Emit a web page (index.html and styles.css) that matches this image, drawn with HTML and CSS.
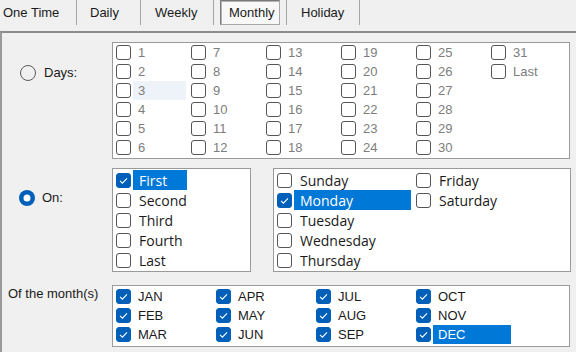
FILE: index.html
```html
<!DOCTYPE html>
<html lang="en">
<head>
    <meta charset="UTF-8">
    <meta name="viewport" content="width=device-width, initial-scale=1.0">
    <title>Schedule - Monthly</title>
    <link rel="stylesheet" href="styles.css">
</head>
<body>
    <div class="tabs">
        <div class="tab tab-first">One Time</div>
        <div class="tab tab-daily">Daily</div>
        <div class="tab">Weekly</div>
        <div class="tab tab-active"><span class="tab-box">Monthly</span></div>
        <div class="tab">Holiday</div>
    </div>

    <div class="panel">
        <!-- Days of the month -->
        <div class="row">
            <div class="side side-days">
                <span class="radio"></span>Days:
            </div>
            <div class="list days-list">
                <div class="item"><span class="cb"></span><span class="txt">1</span></div>
                <div class="item"><span class="cb"></span><span class="txt">2</span></div>
                <div class="item"><span class="cb"></span><span class="txt hover">3</span></div>
                <div class="item"><span class="cb"></span><span class="txt">4</span></div>
                <div class="item"><span class="cb"></span><span class="txt">5</span></div>
                <div class="item"><span class="cb"></span><span class="txt">6</span></div>
                <div class="item"><span class="cb"></span><span class="txt">7</span></div>
                <div class="item"><span class="cb"></span><span class="txt">8</span></div>
                <div class="item"><span class="cb"></span><span class="txt">9</span></div>
                <div class="item"><span class="cb"></span><span class="txt">10</span></div>
                <div class="item"><span class="cb"></span><span class="txt">11</span></div>
                <div class="item"><span class="cb"></span><span class="txt">12</span></div>
                <div class="item"><span class="cb"></span><span class="txt">13</span></div>
                <div class="item"><span class="cb"></span><span class="txt">14</span></div>
                <div class="item"><span class="cb"></span><span class="txt">15</span></div>
                <div class="item"><span class="cb"></span><span class="txt">16</span></div>
                <div class="item"><span class="cb"></span><span class="txt">17</span></div>
                <div class="item"><span class="cb"></span><span class="txt">18</span></div>
                <div class="item"><span class="cb"></span><span class="txt">19</span></div>
                <div class="item"><span class="cb"></span><span class="txt">20</span></div>
                <div class="item"><span class="cb"></span><span class="txt">21</span></div>
                <div class="item"><span class="cb"></span><span class="txt">22</span></div>
                <div class="item"><span class="cb"></span><span class="txt">23</span></div>
                <div class="item"><span class="cb"></span><span class="txt">24</span></div>
                <div class="item"><span class="cb"></span><span class="txt">25</span></div>
                <div class="item"><span class="cb"></span><span class="txt">26</span></div>
                <div class="item"><span class="cb"></span><span class="txt">27</span></div>
                <div class="item"><span class="cb"></span><span class="txt">28</span></div>
                <div class="item"><span class="cb"></span><span class="txt">29</span></div>
                <div class="item"><span class="cb"></span><span class="txt">30</span></div>
                <div class="item"><span class="cb"></span><span class="txt">31</span></div>
                <div class="item"><span class="cb"></span><span class="txt">Last</span></div>
            </div>
        </div>

        <!-- On: which / weekday -->
        <div class="row row-on">
            <div class="side side-on">
                <span class="radio checked"></span>On:
            </div>
            <div class="list which-list">
                <div class="item"><span class="cb on"><svg viewBox="0 0 13 13"><path d="M3 6.8l2.4 2.3L10 4.3"/></svg></span><span class="txt sel">First</span></div>
                <div class="item"><span class="cb"></span><span class="txt">Second</span></div>
                <div class="item"><span class="cb"></span><span class="txt">Third</span></div>
                <div class="item"><span class="cb"></span><span class="txt">Fourth</span></div>
                <div class="item"><span class="cb"></span><span class="txt">Last</span></div>
            </div>
            <div class="list weekday-list">
                <div class="item"><span class="cb"></span><span class="txt">Sunday</span></div>
                <div class="item"><span class="cb on"><svg viewBox="0 0 13 13"><path d="M3 6.8l2.4 2.3L10 4.3"/></svg></span><span class="txt sel">Monday</span></div>
                <div class="item"><span class="cb"></span><span class="txt">Tuesday</span></div>
                <div class="item"><span class="cb"></span><span class="txt">Wednesday</span></div>
                <div class="item"><span class="cb"></span><span class="txt">Thursday</span></div>
                <div class="item"><span class="cb"></span><span class="txt">Friday</span></div>
                <div class="item"><span class="cb"></span><span class="txt">Saturday</span></div>
            </div>
        </div>

        <!-- Months -->
        <div class="row row-months">
            <div class="side side-months">Of the month(s)</div>
            <div class="list months-list">
                <div class="item"><span class="cb on"><svg viewBox="0 0 13 13"><path d="M3 6.8l2.4 2.3L10 4.3"/></svg></span><span class="txt">JAN</span></div>
                <div class="item"><span class="cb on"><svg viewBox="0 0 13 13"><path d="M3 6.8l2.4 2.3L10 4.3"/></svg></span><span class="txt">FEB</span></div>
                <div class="item"><span class="cb on"><svg viewBox="0 0 13 13"><path d="M3 6.8l2.4 2.3L10 4.3"/></svg></span><span class="txt">MAR</span></div>
                <div class="item"><span class="cb on"><svg viewBox="0 0 13 13"><path d="M3 6.8l2.4 2.3L10 4.3"/></svg></span><span class="txt">APR</span></div>
                <div class="item"><span class="cb on"><svg viewBox="0 0 13 13"><path d="M3 6.8l2.4 2.3L10 4.3"/></svg></span><span class="txt">MAY</span></div>
                <div class="item"><span class="cb on"><svg viewBox="0 0 13 13"><path d="M3 6.8l2.4 2.3L10 4.3"/></svg></span><span class="txt">JUN</span></div>
                <div class="item"><span class="cb on"><svg viewBox="0 0 13 13"><path d="M3 6.8l2.4 2.3L10 4.3"/></svg></span><span class="txt">JUL</span></div>
                <div class="item"><span class="cb on"><svg viewBox="0 0 13 13"><path d="M3 6.8l2.4 2.3L10 4.3"/></svg></span><span class="txt">AUG</span></div>
                <div class="item"><span class="cb on"><svg viewBox="0 0 13 13"><path d="M3 6.8l2.4 2.3L10 4.3"/></svg></span><span class="txt">SEP</span></div>
                <div class="item"><span class="cb on"><svg viewBox="0 0 13 13"><path d="M3 6.8l2.4 2.3L10 4.3"/></svg></span><span class="txt">OCT</span></div>
                <div class="item"><span class="cb on"><svg viewBox="0 0 13 13"><path d="M3 6.8l2.4 2.3L10 4.3"/></svg></span><span class="txt">NOV</span></div>
                <div class="item"><span class="cb on"><svg viewBox="0 0 13 13"><path d="M3 6.8l2.4 2.3L10 4.3"/></svg></span><span class="txt sel">DEC</span></div>
            </div>
        </div>
    </div>
</body>
</html>
```

FILE: styles.css
```css
body {
    margin: 0;
    background-color: #f0f0f0;
    font-family: "Liberation Sans", Arial, sans-serif;
    font-size: 13px;
    color: #1a1a1a;
    overflow: hidden;
}
.tabs {
    display: flex;
    height: 31px;
}
.tab {
    box-sizing: border-box;
    height: 25px;
    line-height: 25px;
    width: 73px;
    padding-left: 14px;
    border-right: 1px solid #a6a6a6;
}
.tab-first {
    width: 77px;
    padding-left: 3px;
}
.tab-daily {
    width: 64px;
    padding-left: 13px;
}
.tab-active {
    padding-left: 6px;
}
.tab-box {
    display: block;
    box-sizing: border-box;
    width: 60px;
    height: 25px;
    line-height: 23px;
    padding-left: 8px;
    border: 1px solid #7a7a7a;
    border-right-color: #a8a8a8;
    border-bottom-color: #a8a8a8;
    box-shadow: inset 1px 1px 0 #b4b4b4;
    background-color: #f8f8f8;
}
.panel {
    box-sizing: border-box;
    height: 321px;
    padding-top: 9px;
    border-top: 2px solid #8c8c8c;
    border-left: 2px solid #9a9a9a;
}
.row {
    display: flex;
}
.row-on {
    margin-top: 9px;
}
.row-months {
    margin-top: 13px;
}
.side {
    box-sizing: border-box;
    width: 110px;
    flex: none;
    display: flex;
    align-items: flex-start;
    line-height: 16px;
}
.side-days {
    padding-top: 23px;
    padding-left: 18px;
}
.side-days .radio {
    margin-right: 8px;
}
.side-on {
    padding-top: 22px;
    padding-left: 17px;
}
.side-months {
    padding-top: 1px;
    padding-left: 6px;
}
.radio {
    width: 16px;
    height: 16px;
    box-sizing: border-box;
    border: 1px solid #5a5a5a;
    border-radius: 50%;
    margin-right: 7px;
}
.radio.checked {
    border: none;
    background-color: #fff;
    box-shadow: inset 0 0 0 4.5px #005fb8;
}
.list {
    box-sizing: border-box;
    border: 1px solid #9a9a9a;
    background-color: #fff;
    display: grid;
    grid-auto-flow: column;
    align-content: start;
}
.days-list {
    width: 458px;
    height: 117px;
    grid-template-columns: repeat(6, 75px);
    grid-template-rows: repeat(6, 19px);
    font-size: 13px;
    color: #7d7d7d;
}
.which-list,
.weekday-list {
    height: 104px;
    padding-top: 1px;
    grid-template-rows: repeat(5, 20px);
    font-family: "Open Sans", "Liberation Sans", sans-serif;
    font-size: 14px;
}
.which-list {
    width: 139px;
    grid-template-columns: 76px;
}
.weekday-list {
    width: 298px;
    margin-left: 22px;
    grid-template-columns: repeat(2, 139px);
}
.months-list {
    width: 458px;
    height: 62px;
    padding-top: 1px;
    grid-template-columns: repeat(4, 100px);
    grid-template-rows: repeat(3, 19px);
}
.item {
    display: flex;
    align-items: stretch;
    padding-left: 3px;
}
.cb {
    flex: none;
    align-self: center;
    width: 15px;
    height: 15px;
    box-sizing: border-box;
    border: 1px solid #555;
    border-radius: 3px;
    background-color: #fff;
}
.cb.on {
    background-color: #005fb8;
    border-color: #005fb8;
}
.cb svg {
    display: block;
    width: 13px;
    height: 13px;
    fill: none;
    stroke: #fff;
    stroke-width: 1.1;
}
.txt {
    flex: 1;
    display: flex;
    align-items: center;
    margin-left: 2px;
    margin-right: 2px;
    padding-left: 5px;
    white-space: nowrap;
}
.which-list .txt,
.weekday-list .txt {
    padding-left: 6px;
}
.txt.sel {
    background-color: #0078d7;
    color: #fff;
}
.txt.hover {
    background-color: #eef3fa;
}
```
